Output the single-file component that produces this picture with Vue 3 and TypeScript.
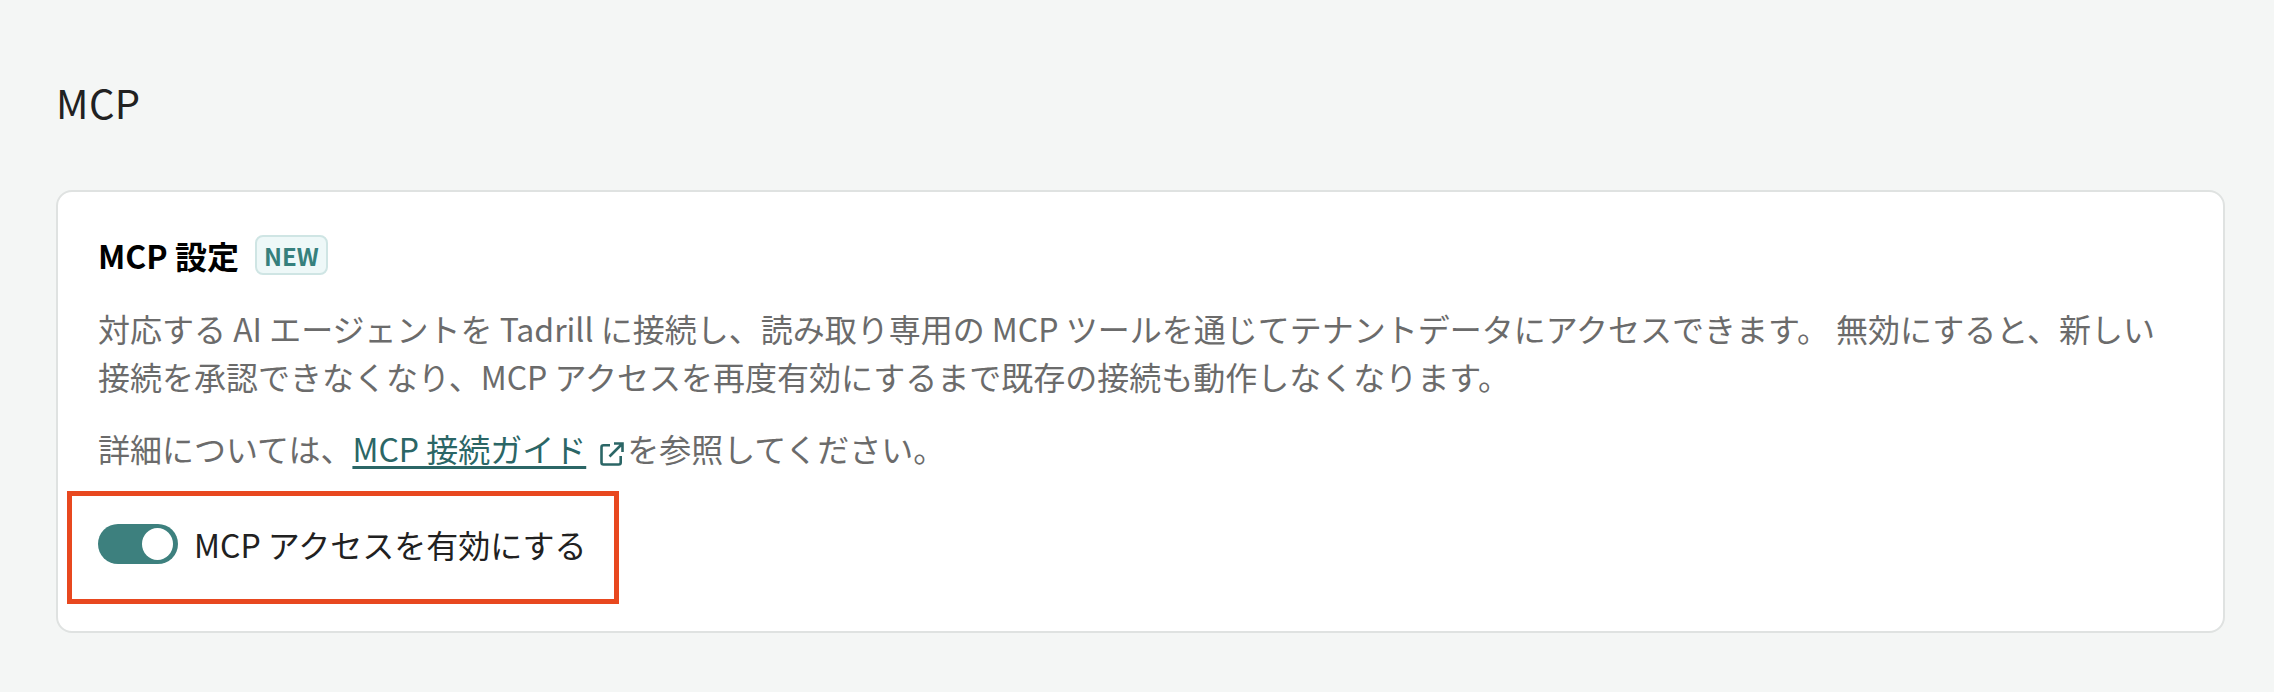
<script setup lang="ts">
const title = 'MCP'
</script>

<template>
  <main class="page">
    <h1 class="title">{{ title }}</h1>
    <section class="card">
      <div class="head">
        <h2 class="head-text">MCP 設定</h2>
        <span class="badge">NEW</span>
      </div>
      <p class="desc">対応する AI エージェントを Tadrill に接続し、読み取り専用の MCP ツールを通じてテナントデータにアクセスできます。 無効にすると、新しい接続を承認できなくなり、MCP アクセスを再度有効にするまで既存の接続も動作しなくなります。</p>
      <p class="desc more">詳細については、<a class="link" href="#">MCP 接続ガイド</a><svg class="ext" viewBox="0 0 24 24" fill="none" stroke="currentColor" stroke-width="2.6" aria-hidden="true"><path d="M10 3.3H3.5a2 2 0 0 0-2 2V20.500a2 2 0 0 0 2 2h15.200a2 2 0 0 0 2-2V14" /><path d="M9.500 14.500 22 2M14 1.500h8.500V10" /></svg>を参照してください。</p>
      <div class="toggle-row">
        <span class="toggle"><span class="thumb"></span></span>
        <span class="toggle-label">MCP アクセスを有効にする</span>
        <span class="highlight"></span>
      </div>
    </section>
  </main>
</template>

<style>
html, body { margin: 0; background: #f4f6f5; }
</style>

<style scoped>
.page {
  box-sizing: border-box;
  width: 2274px;
  height: 692px;
  padding: 72px 49px 0 56px;
  background: #f4f6f5;
  font-family: "Noto Sans CJK JP", "Noto Sans", sans-serif;
  color: #212121;
}
.title {
  margin: 0;
  font-size: 40px;
  line-height: 60px;
  font-weight: 400;
  letter-spacing: 0.4px;
}
.card {
  box-sizing: border-box;
  height: 443px;
  margin-top: 58px;
  padding: 43px 40px 0;
  background: #fff;
  border: 2px solid #dfe2e1;
  border-radius: 16px;
}
.head { display: flex; align-items: center; gap: 16px; height: 40px; }
.head-text { margin: 0; font-size: 32px; font-weight: 700; color: #000; line-height: 40px; }
.badge {
  box-sizing: border-box;
  height: 40px;
  padding: 0 7px;
  display: flex;
  align-items: center;
  font-size: 24px;
  font-weight: 700;
  color: #36807d;
  background: #eef8f8;
  border: 2px solid #cfe5e4;
  border-radius: 8px;
}
.desc {
  margin: 29px 0 0;
  font-size: 32px;
  line-height: 48px;
  color: #6b6b6b;
  font-weight: 400;
}
.more { margin-top: 24px; }
.link {
  color: #2b6666;
  text-decoration: underline;
  text-decoration-thickness: 3px;
  text-underline-offset: 4px;
}
.ext { width: 24px; height: 24px; color: #2b6666; vertical-align: -4px; margin: 0 3px 0 14px; }
.toggle-row { position: relative; display: flex; align-items: center; gap: 16px; margin-top: 44px; height: 56px; }
.toggle {
  box-sizing: border-box;
  width: 80px;
  height: 40px;
  padding: 4px 5px;
  display: flex;
  justify-content: flex-end;
  background: #3d807e;
  border-radius: 20px;
}
.thumb { width: 31px; height: 32px; background: #fff; border-radius: 50%; }
.toggle-label { font-size: 32px; color: #212121; }
.highlight {
  position: absolute;
  left: -31px;
  top: -25px;
  width: 552px;
  height: 113px;
  box-sizing: border-box;
  border: 5px solid #e8481f;
}
</style>
